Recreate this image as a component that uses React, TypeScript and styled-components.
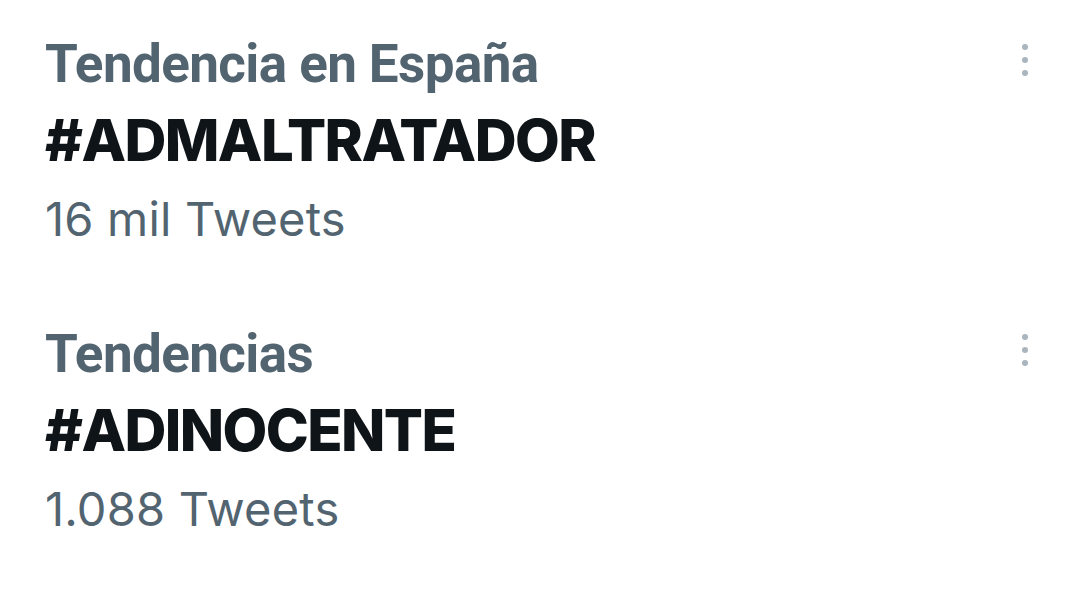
import React from 'react'
import styled, { createGlobalStyle } from 'styled-components'

const GlobalStyle = createGlobalStyle`
  html, body {
    margin: 0;
    padding: 0;
    background: #ffffff;
  }
  body {
    font-family: Inter, "Liberation Sans", Arial, sans-serif;
    -webkit-font-smoothing: antialiased;
  }
`

const Page = styled.div`
  width: 1080px;
  height: 602px;
  padding: 29px 50px 0 45px;
  box-sizing: border-box;
  display: flex;
  flex-direction: column;
  gap: 62px;
`

const TrendRow = styled.div`
  display: flex;
  justify-content: space-between;
  align-items: flex-start;
`

const TrendText = styled.div`
  display: flex;
  flex-direction: column;
`

const Context = styled.div`
  font-family: Roboto, Inter, sans-serif;
  font-size: 53px;
  line-height: 70px;
  font-weight: 700;
  color: #536471;
  letter-spacing: -0.6px;
`

const Hashtag = styled.div`
  font-size: 58px;
  line-height: 82px;
  font-weight: 800;
  color: #0f1419;
  letter-spacing: -1.6px;
`

const Count = styled.div`
  font-size: 47px;
  line-height: 76px;
  font-weight: 400;
  color: #536471;
  letter-spacing: 0.2px;
`

const MoreButton = styled.button`
  border: none;
  background: transparent;
  padding: 0;
  margin-top: 15px;
  width: 10px;
  display: flex;
  flex-direction: column;
  align-items: center;
  gap: 7px;
`

const Dot = styled.span`
  width: 6px;
  height: 6px;
  border-radius: 50%;
  background: #aab5bd;
`

type Trend = {
  context: string
  tag: string
  count: string
}

const trends: Trend[] = [
  { context: 'Tendencia en España', tag: '#ADMALTRATADOR', count: '16 mil Tweets' },
  { context: 'Tendencias', tag: '#ADINOCENTE', count: '1.088 Tweets' },
]

function App() {
  return (
    <>
      <GlobalStyle />
      <Page>
        {trends.map(trend => (
          <TrendRow key={trend.tag}>
            <TrendText>
              <Context>{trend.context}</Context>
              <Hashtag>{trend.tag}</Hashtag>
              <Count>{trend.count}</Count>
            </TrendText>
            <MoreButton aria-label="Más opciones">
              <Dot />
              <Dot />
              <Dot />
            </MoreButton>
          </TrendRow>
        ))}
      </Page>
    </>
  )
}

export default App
